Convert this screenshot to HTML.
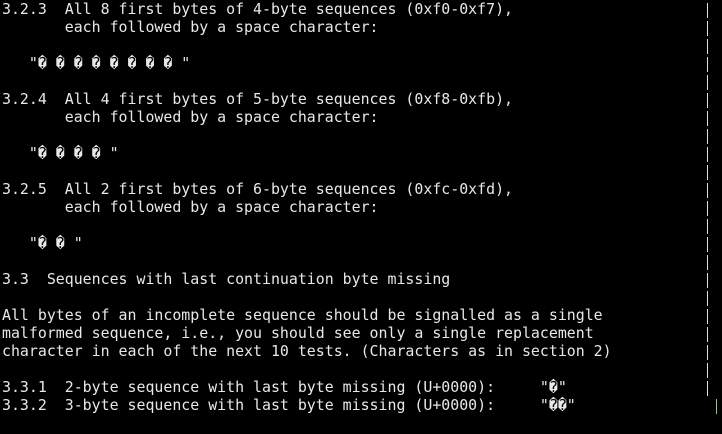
<!DOCTYPE html>
<html><head><meta charset="utf-8"><style>
html,body{margin:0;padding:0;background:#000;width:722px;height:434px;overflow:hidden;position:relative}
pre{margin:0;padding:0 0 0 2px;color:#e8e8e8;font-family:"DejaVu Sans Mono","Liberation Mono",monospace;font-size:14.9px;line-height:18px;white-space:pre}
.b{position:absolute;left:707px;width:1px;background:#e0e0e0;height:15px}
</style></head><body><pre>3.2.3  All 8 first bytes of 4-byte sequences (0xf0-0xf7),
       each followed by a space character:

   "� � � � � � � � "

3.2.4  All 4 first bytes of 5-byte sequences (0xf8-0xfb),
       each followed by a space character:

   "� � � � "

3.2.5  All 2 first bytes of 6-byte sequences (0xfc-0xfd),
       each followed by a space character:

   "� � "

3.3  Sequences with last continuation byte missing

All bytes of an incomplete sequence should be signalled as a single
malformed sequence, i.e., you should see only a single replacement
character in each of the next 10 tests. (Characters as in section 2)

3.3.1  2-byte sequence with last byte missing (U+0000):     "�"
3.3.2  3-byte sequence with last byte missing (U+0000):     "��"</pre>
<div class="b" style="top:3px"></div><div class="b" style="top:21px"></div><div class="b" style="top:39px"></div><div class="b" style="top:57px"></div><div class="b" style="top:75px"></div><div class="b" style="top:93px"></div><div class="b" style="top:111px"></div><div class="b" style="top:129px"></div><div class="b" style="top:147px"></div><div class="b" style="top:165px"></div><div class="b" style="top:183px"></div><div class="b" style="top:201px"></div><div class="b" style="top:219px"></div><div class="b" style="top:237px"></div><div class="b" style="top:255px"></div><div class="b" style="top:273px"></div><div class="b" style="top:291px"></div><div class="b" style="top:309px"></div><div class="b" style="top:327px"></div><div class="b" style="top:345px"></div><div class="b" style="top:363px"></div><div class="b" style="top:381px"></div>
<div class="b" style="top:399px;left:716px;background:#8c8"></div>
</body></html>
